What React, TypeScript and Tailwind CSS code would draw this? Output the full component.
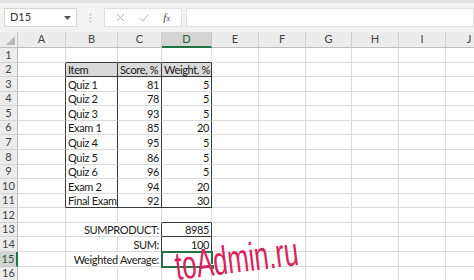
const COLS = ['A', 'B', 'C', 'D', 'E', 'F', 'G', 'H', 'I', 'J'];
const ROW_COUNT = 16;

const ITEMS: [string, number, number][] = [
  ['Quiz 1', 81, 5],
  ['Quiz 2', 78, 5],
  ['Quiz 3', 93, 5],
  ['Exam 1', 85, 20],
  ['Quiz 4', 95, 5],
  ['Quiz 5', 86, 5],
  ['Quiz 6', 96, 5],
  ['Exam 2', 94, 20],
  ['Final Exam', 92, 30],
];

type Cell = { text: string; align: 'left' | 'right' };

function cellValue(row: number, col: string): Cell | null {
  if (row === 2) {
    if (col === 'B') return { text: 'Item', align: 'left' };
    if (col === 'C') return { text: 'Score, %', align: 'left' };
    if (col === 'D') return { text: 'Weight, %', align: 'left' };
  }
  if (row >= 3 && row <= 11) {
    const [item, score, weight] = ITEMS[row - 3];
    if (col === 'B') return { text: item, align: 'left' };
    if (col === 'C') return { text: String(score), align: 'right' };
    if (col === 'D') return { text: String(weight), align: 'right' };
  }
  if (col === 'C') {
    if (row === 13) return { text: 'SUMPRODUCT:', align: 'right' };
    if (row === 14) return { text: 'SUM:', align: 'right' };
    if (row === 15) return { text: 'Weighted Average:', align: 'right' };
  }
  if (col === 'D') {
    if (row === 13) return { text: '8985', align: 'right' };
    if (row === 14) return { text: '100', align: 'right' };
  }
  return null;
}

const inTable = (c: string) => c === 'B' || c === 'C' || c === 'D';

function borderClasses(row: number, col: string) {
  const rightDark =
    (row >= 2 && row <= 11 && (col === 'A' || inTable(col))) ||
    ((row === 13 || row === 14) && (col === 'C' || col === 'D'));
  const rightNone = (row === 13 || row === 15) && col === 'B';
  const bottomDark =
    ((row === 1 || row === 2 || row === 11) && inTable(col)) ||
    (col === 'D' && (row === 12 || row === 13 || row === 14));

  const r = rightDark ? 'border-r-[#3a3a3a]' : rightNone ? 'border-r-transparent' : 'border-r-[#dadada]';
  const b = bottomDark ? 'border-b-[#3a3a3a]' : 'border-b-[#dadada]';
  return `${r} ${b}`;
}

function FormulaBar() {
  return (
    <div className="h-[32px] bg-[#f3f3f3] border-t-[3px] border-t-[#e4e4e4] flex items-start pt-[5px] pl-[4px] gap-[4px]">
      <div className="w-[73px] h-[19px] bg-white border border-[#d4d4d4] flex items-center justify-between pl-[5px] pr-[5px] text-[11px] text-[#333]">
        <span>D15</span>
        <svg width="7" height="4" viewBox="0 0 7 4">
          <path d="M0 0 L7 0 L3.5 4 Z" fill="#555" />
        </svg>
      </div>
      <div className="w-[19px] h-[19px] flex items-center justify-center">
        <svg width="3" height="10" viewBox="0 0 3 10">
          <circle cx="1.5" cy="1.5" r="1" fill="#c4c4c4" />
          <circle cx="1.5" cy="5" r="1" fill="#c4c4c4" />
          <circle cx="1.5" cy="8.5" r="1" fill="#c4c4c4" />
        </svg>
      </div>
      <div className="w-[78px] h-[19px] bg-white border border-[#e0e0e0] flex items-center justify-around px-[4px]">
        <svg width="9" height="9" viewBox="0 0 9 9">
          <path d="M1 1 L8 8 M8 1 L1 8" stroke="#b4b4b4" strokeWidth="1" />
        </svg>
        <svg width="10" height="8" viewBox="0 0 10 8">
          <path d="M1 4.5 L3.8 7 L9 1" stroke="#b4b4b4" strokeWidth="1" fill="none" />
        </svg>
        <span className="font-['Liberation_Serif',serif] italic text-[11px] text-[#444] leading-none">
          f<span className="text-[8px]">x</span>
        </span>
      </div>
      <div className="flex-1 h-[19px] bg-white border border-[#e0e0e0]" />
    </div>
  );
}

export default function App() {
  return (
    <div className="w-[474px] h-[280px] overflow-hidden bg-white font-['Lato',sans-serif] text-[#1a1a1a]">
      <FormulaBar />
      <div className="relative grid grid-cols-[18px_48px_52px_44px_50px_47px_47px_46px_47px_47px_47px] grid-rows-[16px_15px_14px_15px_14px_15px_14px_15px_15px_14px_15px_14px_15px_14px_15px_15px_14px]">
        {/* column headers */}
        <div className="bg-[#ececec] border-r border-b border-r-[#c8c8c8] border-b-[#bdbdbd] relative">
          <svg className="absolute right-[2px] bottom-[2px]" width="9" height="9" viewBox="0 0 9 9">
            <path d="M9 0 L9 9 L0 9 Z" fill="#b9b9b9" />
          </svg>
        </div>
        {COLS.map((c) =>
          c === 'D' ? (
            <div
              key={c}
              className="bg-[#d4d4d4] border-r border-r-[#c8c8c8] border-b-2 border-b-[#217346] flex items-center justify-center text-[11px] text-[#1d5b38]"
            >
              {c}
            </div>
          ) : (
            <div
              key={c}
              className="bg-[#ececec] border-r border-b border-r-[#d0d0d0] border-b-[#bdbdbd] flex items-center justify-center text-[11px] text-[#444]"
            >
              {c}
            </div>
          ),
        )}

        {Array.from({ length: ROW_COUNT }, (_, i) => i + 1).map((row) => (
          <div key={row} className="contents">
            {row === 15 ? (
              <div className="bg-[#d4d4d4] border-r-2 border-b border-r-[#217346] border-b-[#c8c8c8] flex items-center justify-center text-[11px] text-[#1d5b38]">
                {row}
              </div>
            ) : (
              <div className="bg-[#ececec] border-r border-b border-r-[#bdbdbd] border-b-[#d4d4d4] flex items-center justify-center text-[11px] text-[#444]">
                {row}
              </div>
            )}
            {COLS.map((col) => {
              const v = cellValue(row, col);
              const header = row === 2 && inTable(col);
              return (
                <div
                  key={col}
                  className={`border-r border-b ${borderClasses(row, col)} ${
                    header ? 'bg-[#d9d9d9]' : ''
                  } flex items-center min-w-0 text-[11px] tracking-[-0.35px] leading-none ${
                    v?.align === 'right' ? 'justify-end pr-[2px]' : 'justify-start pl-[2px]'
                  }`}
                >
                  {v ? <span className="whitespace-nowrap shrink-0">{v.text}</span> : null}
                </div>
              );
            })}
          </div>
        ))}

        {/* active cell D15 */}
        <div className="absolute left-[161px] top-[219px] w-[52px] h-[17px] border-2 border-[#217346] pointer-events-none">
          <div className="absolute right-[-4px] bottom-[-4px] w-[6px] h-[6px] bg-[#217346] border border-white" />
        </div>

        {/* watermark */}
        <div className="absolute left-[175px] top-[214px] origin-left -rotate-[7deg] pointer-events-none">
          <span className="block scale-x-[0.64] origin-left font-['Liberation_Sans',sans-serif] text-[40px] leading-none text-[#d8245c] whitespace-nowrap">
            toAdmin.ru
          </span>
        </div>
      </div>
    </div>
  );
}
